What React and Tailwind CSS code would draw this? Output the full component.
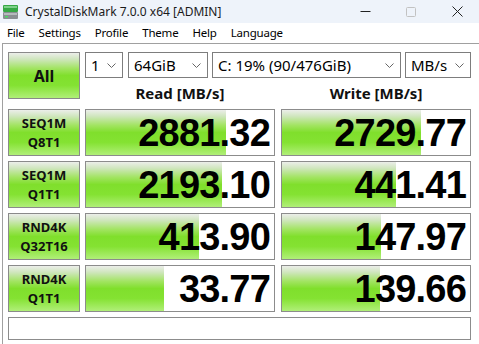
import React from 'react'

const rows = [
  { a: 'SEQ1M', b: 'Q8T1', read: '2881.32', readPct: 74.5, write: '2729.77', writePct: 74 },
  { a: 'SEQ1M', b: 'Q1T1', read: '2193.10', readPct: 72.5, write: '441.41', writePct: 60.5 },
  { a: 'RND4K', b: 'Q32T16', read: '413.90', readPct: 60, write: '147.97', writePct: 52.5 },
  { a: 'RND4K', b: 'Q1T1', read: '33.77', readPct: 41.5, write: '139.66', writePct: 52 },
]

const green =
  'bg-[linear-gradient(to_bottom,#eceeea_0%,#cfe6bd_14%,#a2e462_34%,#80df2c_50%,#84e232_72%,#b0ef78_100%)]'

function Select({ value, className }) {
  return (
    <div className={`h-[26px] border border-[#7d7d7d] bg-white flex items-center justify-between pl-[5px] pr-[6px] text-[15px] text-black ${className}`}>
      <span className="leading-none">{value}</span>
      <svg width="9" height="5" viewBox="0 0 9 5" className="shrink-0">
        <path d="M0.5 0.5 L4.5 4.5 L8.5 0.5" fill="none" stroke="#666" strokeWidth="1" />
      </svg>
    </div>
  )
}

function ValueBox({ value, pct }) {
  return (
    <div className="relative h-[47px] w-[190px] border border-[#8c8c8c] bg-white overflow-hidden">
      <div className={`absolute left-0 top-0 bottom-0 ${green}`} style={{ width: `${pct}%` }} />
      <div className="relative h-full flex items-center justify-end pr-[4px] font-['Liberation_Sans',sans-serif] font-bold text-[38px] tracking-[-0.8px] text-black leading-none">
        {value}
      </div>
    </div>
  )
}

function LabelBtn({ children, className = '' }) {
  return (
    <div className={`w-[72px] h-[47px] border border-[#8a8a8a] ${green} flex flex-col items-center justify-center font-bold text-[#111] ${className}`}>
      {children}
    </div>
  )
}

export default function App() {
  return (
    <div className="w-[479px] h-[344px] bg-white overflow-hidden font-['Noto_Sans',sans-serif] relative">
      {/* title bar */}
      <div className="h-[23px] bg-[#eef3fa] flex items-center">
        <svg width="15" height="14" viewBox="0 0 15 14" className="ml-[3px] mt-[1px]">
          <rect x="0" y="0" width="15" height="7" rx="1" fill="#36a845" />
          <rect x="1" y="1" width="13" height="2" fill="#7ed08a" />
          <rect x="0" y="7" width="15" height="7" rx="1" fill="#8a8f93" />
          <rect x="1" y="8" width="13" height="2" fill="#b5babd" />
          <rect x="2" y="11" width="3" height="1.5" fill="#4cd964" />
        </svg>
        <span className="ml-[7px] text-[12px] text-[#1a1a1a]">CrystalDiskMark 7.0.0 x64 [ADMIN]</span>
        <div className="ml-auto flex items-center h-full">
          <svg width="11" height="11" viewBox="0 0 11 11" className="mr-[34px]">
            <line x1="0.5" y1="5.5" x2="10.5" y2="5.5" stroke="#222" strokeWidth="1" />
          </svg>
          <svg width="11" height="11" viewBox="0 0 11 11" className="mr-[36px]">
            <rect x="1.5" y="1.5" width="9" height="9" rx="1" fill="none" stroke="#c2c2c2" strokeWidth="1" />
          </svg>
          <svg width="11" height="11" viewBox="0 0 11 11" className="mr-[16px]">
            <path d="M0.5 0.5 L10.5 10.5 M10.5 0.5 L0.5 10.5" stroke="#222" strokeWidth="1" />
          </svg>
        </div>
      </div>

      {/* menu bar */}
      <div className="h-[20px] flex items-center pl-[7px] gap-[14px] text-[11.5px] tracking-[-0.2px] text-black">
        <span>File</span>
        <span>Settings</span>
        <span>Profile</span>
        <span>Theme</span>
        <span>Help</span>
        <span>Language</span>
      </div>

      {/* client area */}
      <div className="ml-[2px] border-t border-l border-[#a0a0a0] pt-[8px] pl-[5px] h-[301px]">
        <div className="flex gap-[5px]">
          <LabelBtn className="text-[16px]">All</LabelBtn>
          <div className="w-[386px]">
            <div className="flex">
              <Select value="1" className="w-[38px]" />
              <Select value="64GiB" className="w-[80px] ml-[5px]" />
              <Select value="C: 19% (90/476GiB)" className="w-[189px] ml-[4px]" />
              <Select value="MB/s" className="w-[66px] ml-[4px]" />
            </div>
            <div className="flex gap-[6px] h-[26px] items-center pt-[4px] text-[15px] font-bold text-[#111]">
              <div className="w-[190px] text-center">Read [MB/s]</div>
              <div className="w-[190px] text-center">Write [MB/s]</div>
            </div>
          </div>
        </div>

        <div className="flex flex-col gap-[5px] mt-[5px]">
          {rows.map((r, i) => (
            <div key={i} className="flex">
              <LabelBtn className="text-[13px] leading-[19px]">
                <span>{r.a}</span>
                <span>{r.b}</span>
              </LabelBtn>
              <div className="ml-[5px]">
                <ValueBox value={r.read} pct={r.readPct} />
              </div>
              <div className="ml-[6px]">
                <ValueBox value={r.write} pct={r.writePct} />
              </div>
            </div>
          ))}
        </div>

        <div className="mt-[5px] w-[463px] h-[23px] border border-[#8c8c8c] bg-white" />
      </div>
    </div>
  )
}
